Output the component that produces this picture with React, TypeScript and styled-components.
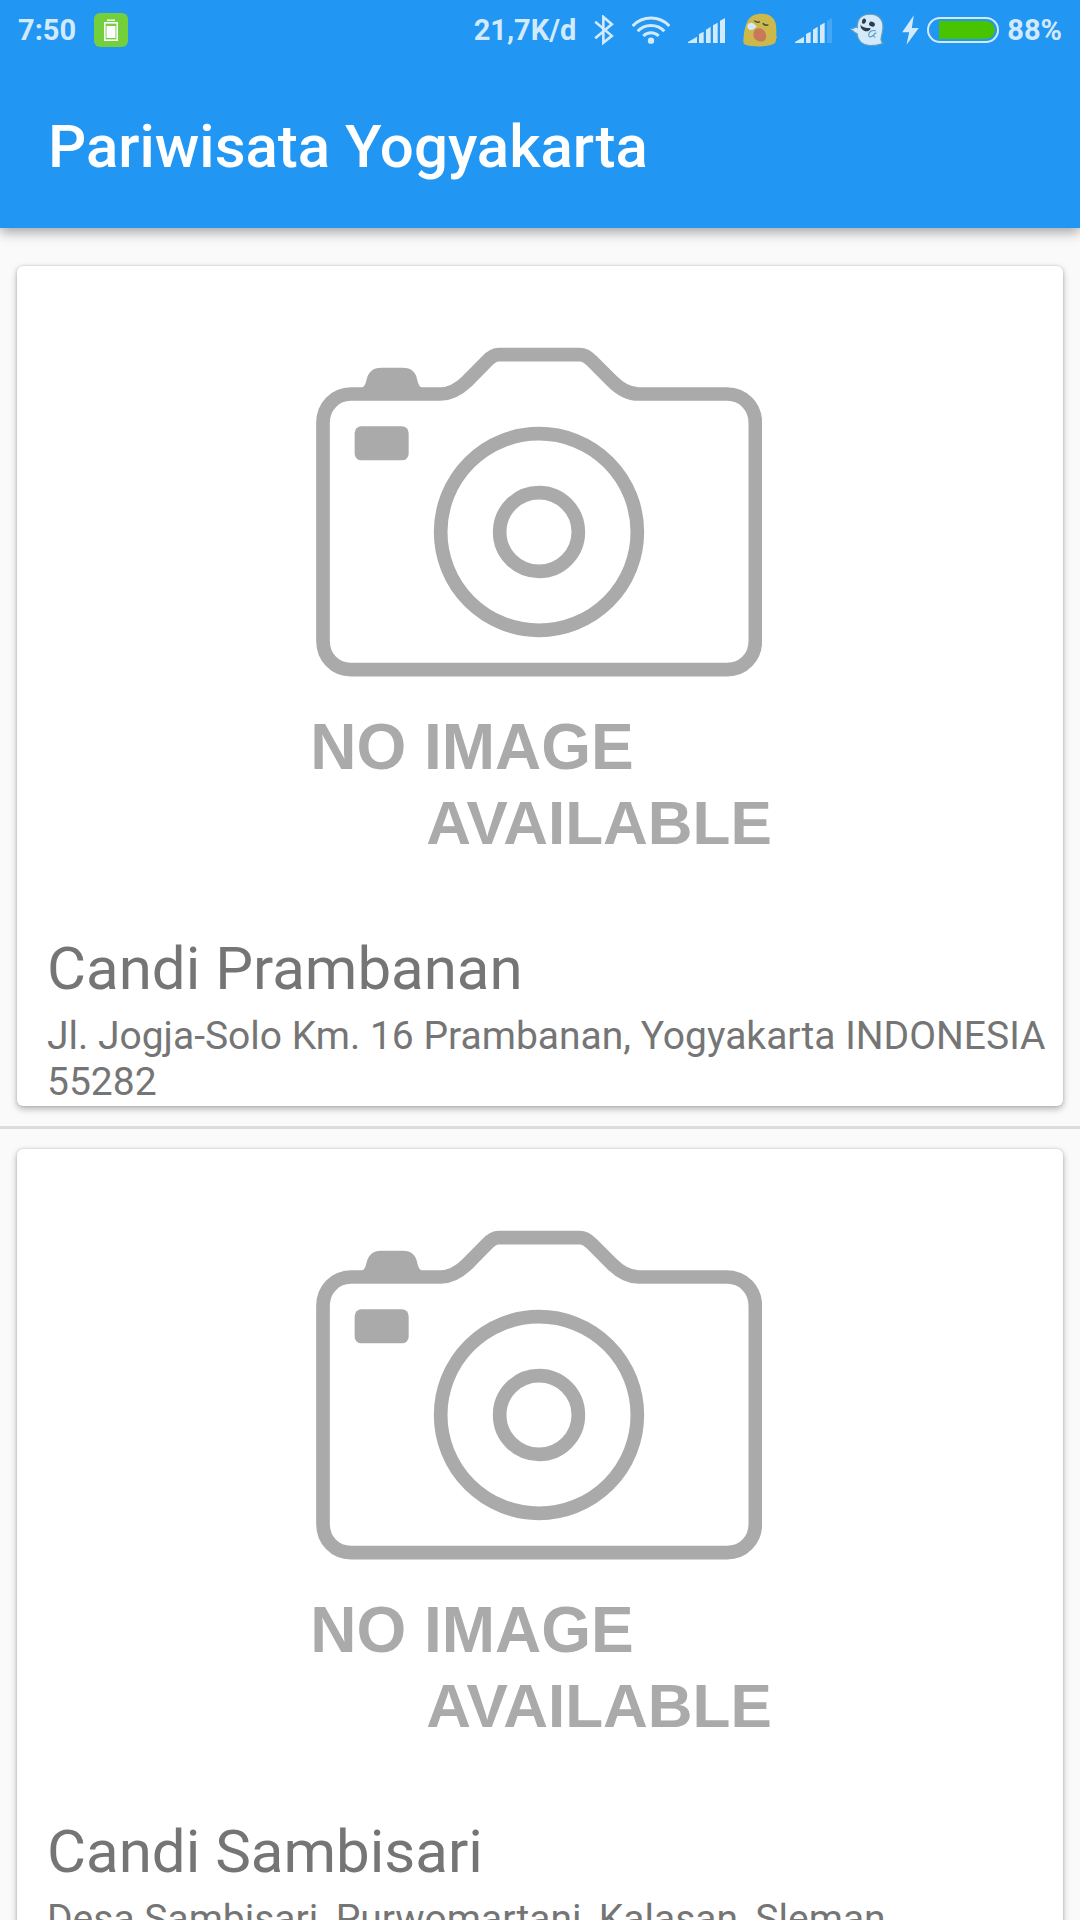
import React from "react";
import styled, { createGlobalStyle } from "styled-components";

const tint = "#d3eafd";
const placeholderGrey = "#aaaaaa";

const GlobalStyle = createGlobalStyle`
  * { box-sizing: border-box; }
  body { margin: 0; background: #fafafa; }
`;

const Screen = styled.div`
  display: flex;
  flex-direction: column;
  height: 100vh;
  overflow: hidden;
  background: #fafafa;
  font-family: Roboto, "Noto Sans", sans-serif;
`;

const Header = styled.header`
  flex: none;
  position: relative;
  z-index: 1;
  background: #2196f3;
  box-shadow: 0 4px 12px rgba(0, 0, 0, 0.36);
`;

const StatusBar = styled.div`
  display: flex;
  align-items: center;
  justify-content: space-between;
  height: 60px;
  padding: 0 18px;
  color: ${tint};
  font-size: 29px;
  line-height: 36px;
  font-weight: 700;
`;

const StatusGroup = styled.div<{ $gap: number }>`
  display: flex;
  align-items: center;
  gap: ${(p) => p.$gap}px;
`;

const Icon = styled.svg<{ $w: number; $h: number }>`
  display: block;
  flex: none;
  width: ${(p) => p.$w}px;
  height: ${(p) => p.$h}px;
`;

const Battery = styled.div`
  width: 72px;
  height: 26px;
  padding: 2px 2px 2px 10px;
  border: 2px solid ${tint};
  border-radius: 13px;
`;

const BatteryLevel = styled.div`
  height: 100%;
  background: #47c300;
  border-radius: 0 9px 9px 0;
`;

const AppBar = styled.div`
  display: flex;
  align-items: center;
  height: 168px;
  padding: 6px 48px 0;
`;

const AppTitle = styled.h1`
  margin: 0;
  color: #ffffff;
  font-size: 60px;
  line-height: 70px;
  font-weight: 500;
`;

const PlaceList = styled.ul`
  flex: 1;
  min-height: 0;
  margin: 0;
  padding: 18px 0 0;
  list-style: none;
  overflow-y: auto;
  scrollbar-width: none;
`;

const PlaceItem = styled.li`
  padding: 20px 17px;
  & + & { border-top: 3px solid #dcdcdc; }
`;

const Card = styled.article`
  background: #ffffff;
  border-radius: 6px;
  box-shadow: 0 3px 7px rgba(0, 0, 0, 0.28), 0 0 3px rgba(0, 0, 0, 0.16);
  color: #757575;
`;

const Placeholder = styled.figure`
  display: flex;
  flex-direction: column;
  align-items: center;
  gap: 33px;
  margin: 0;
  padding: 81px 18px 74px 16px;
`;

const Caption = styled.figcaption`
  display: flex;
  flex-direction: column;
  padding-left: 4px;
  color: ${placeholderGrey};
  font-family: "Liberation Sans", sans-serif;
  font-size: 64px;
  line-height: 75px;
  font-weight: 700;
`;

const CaptionLine = styled.span<{ $indent?: boolean }>`
  padding-left: ${(p) => (p.$indent ? 116 : 0)}px;
  font-size: ${(p) => (p.$indent ? 62 : 64)}px;
`;

const Details = styled.div`
  display: flex;
  flex-direction: column;
  gap: 9px;
  padding: 0 16px 1px 30px;
`;

const PlaceName = styled.h2`
  margin: 0;
  font-size: 60px;
  line-height: 70px;
  font-weight: 400;
`;

const Address = styled.p`
  margin: 0;
  font-size: 39px;
  line-height: 46px;
`;

const BatteryApp = () => (
  <Icon $w={34} $h={34} viewBox="0 0 34 34">
    <rect width="34" height="34" rx="6" fill="#74cf3c" />
    <path d="M13 6.5h8v1.5h-8z" fill="#fff" />
    <rect x="10.8" y="9.8" width="12.4" height="17.4" fill="none" stroke="#fff" strokeWidth="1.6" />
    <path d="M12.5 13h9v12h-9z" fill="#fff" />
  </Icon>
);

const Bluetooth = () => (
  <Icon $w={20} $h={30} viewBox="427 44 60 92">
    <path d="M430 65L481 108L455 129V50L481 72L430 115" fill="none" stroke={tint} strokeWidth="8" />
  </Icon>
);

const Wifi = () => (
  <Icon $w={38} $h={28} viewBox="540 46 114 84">
    <g fill="none" stroke={tint} strokeWidth="9">
      <path d="M542 76A75 75 0 0 1 652 76" />
      <path d="M557 92A54 54 0 0 1 637 92" />
      <path d="M574 106A32 32 0 0 1 620 106" />
    </g>
    <circle cx="597" cy="120" r="9.5" fill={tint} />
  </Icon>
);

const Signal = ({ weak }: { weak?: boolean }) => (
  <Icon $w={37} $h={25} viewBox="708 54 111 75" fill={tint}>
    <path d="M708 129V126L735 110V129ZM741 129V102L755 95V129ZM762 129V89L776 80V129ZM783 129V76L797 68V129Z" />
    <path d="M804 129V62L819 54V129Z" opacity={weak ? 0.2 : 1} />
  </Icon>
);

const SleepyFace = () => (
  <Icon $w={34} $h={34} viewBox="65 35 103 101">
    <path
      d="M66 121C67 96 70 78 78 60C86 43 101 36 122 36C152 36 166 54 166 82V103L168 109L165 112C166 124 159 129 145 132C124 137 91 136 77 132C69 129 66 127 66 121Z"
      fill="#cdb84b"
    />
    <path d="M99 57Q107 65 116 60M125 65Q132 74 142 70" fill="none" stroke="#3a4650" strokeWidth="4" />
    <path d="M105 82C113 78 124 81 130 89C137 99 137 113 129 118C120 123 104 119 98 108C95 98 97 86 105 82Z" fill="#c97859" />
    <path d="M107 75L97 66C90 61 79 65 78 74C77 84 89 88 97 83Z" fill={tint} />
  </Icon>
);

const Ghost = () => (
  <Icon $w={34} $h={34} viewBox="394 35 102 101">
    <path
      d="M416 78C413 54 428 38 454 38C480 38 493 54 493 76C493 92 488 102 487 113C487 120 490 123 493 126C480 130 469 133 454 132C431 131 417 117 415 96C409 95 405 92 403 88C398 87 395 83 397 80L404 81C408 77 412 75 416 78Z"
      fill={tint}
      stroke="#5d9fba"
      strokeWidth="3.5"
    />
    <ellipse cx="436" cy="59" rx="6" ry="8" fill="#2f3d4a" transform="rotate(20 436 59)" />
    <ellipse cx="460" cy="68" rx="9" ry="7" fill="#2f3d4a" transform="rotate(25 460 68)" />
    <path d="M426 69C428 77 442 80 456 80C455 88 444 92 436 88C428 84 424 76 426 69Z" fill="#2f3d4a" />
    <path d="M471 88C459 84 448 93 450 103C453 109 460 106 463 101M473 94C463 96 463 106 470 108" fill="none" stroke="#5d9fba" strokeWidth="3.5" />
  </Icon>
);

const Bolt = () => (
  <Icon $w={17} $h={30} viewBox="552 45 50 90">
    <path d="M587 46L552 97H573L565 134L602 84H581Z" fill={tint} />
  </Icon>
);

const Camera = () => (
  <Icon $w={446} $h={330} viewBox="77 50 1338 990" role="img" aria-label="No image available">
    <path
      d="M182 191H450C480 191 508 174 530 153L588 94Q608 73 625 73H868Q886 73 905 92L963 150Q1003 191 1045 191H1310C1360 191 1395 230 1395 277V932C1395 980 1360 1018 1310 1018H182C133 1018 98 980 98 932V277C98 230 133 191 182 191Z"
      fill="none"
      stroke={placeholderGrey}
      strokeWidth="41"
    />
    <path d="M207 176Q226 170 228 150Q236 112 272 112H338Q375 112 381 150Q384 171 402 176V200H207Z" fill={placeholderGrey} />
    <rect x="193" y="288" width="162" height="102" rx="20" fill={placeholderGrey} />
    <g fill="none" stroke={placeholderGrey} strokeWidth="41">
      <circle cx="746" cy="605" r="295" />
      <circle cx="746" cy="605" r="118" />
    </g>
  </Icon>
);

const places = [
  { name: "Candi Prambanan", address: "Jl. Jogja-Solo Km. 16 Prambanan, Yogyakarta INDONESIA 55282" },
  { name: "Candi Sambisari", address: "Desa Sambisari, Purwomartani, Kalasan, Sleman" },
];

export default function App() {
  return (
    <Screen>
      <GlobalStyle />
      <Header>
        <StatusBar>
          <StatusGroup $gap={18}>
            <span>7:50</span>
            <BatteryApp />
          </StatusGroup>
          <StatusGroup $gap={18}>
            <span>21,7K/d</span>
            <Bluetooth />
            <Wifi />
            <Signal />
            <SleepyFace />
            <Signal weak />
            <Ghost />
            <StatusGroup $gap={8}>
              <Bolt />
              <Battery>
                <BatteryLevel />
              </Battery>
              <span>88%</span>
            </StatusGroup>
          </StatusGroup>
        </StatusBar>
        <AppBar>
          <AppTitle>Pariwisata Yogyakarta</AppTitle>
        </AppBar>
      </Header>
      <PlaceList>
        {places.map((place) => (
          <PlaceItem key={place.name}>
            <Card>
              <Placeholder>
                <Camera />
                <Caption>
                  <CaptionLine>NO IMAGE</CaptionLine>
                  <CaptionLine $indent>AVAILABLE</CaptionLine>
                </Caption>
              </Placeholder>
              <Details>
                <PlaceName>{place.name}</PlaceName>
                <Address>{place.address}</Address>
              </Details>
            </Card>
          </PlaceItem>
        ))}
      </PlaceList>
    </Screen>
  );
}
